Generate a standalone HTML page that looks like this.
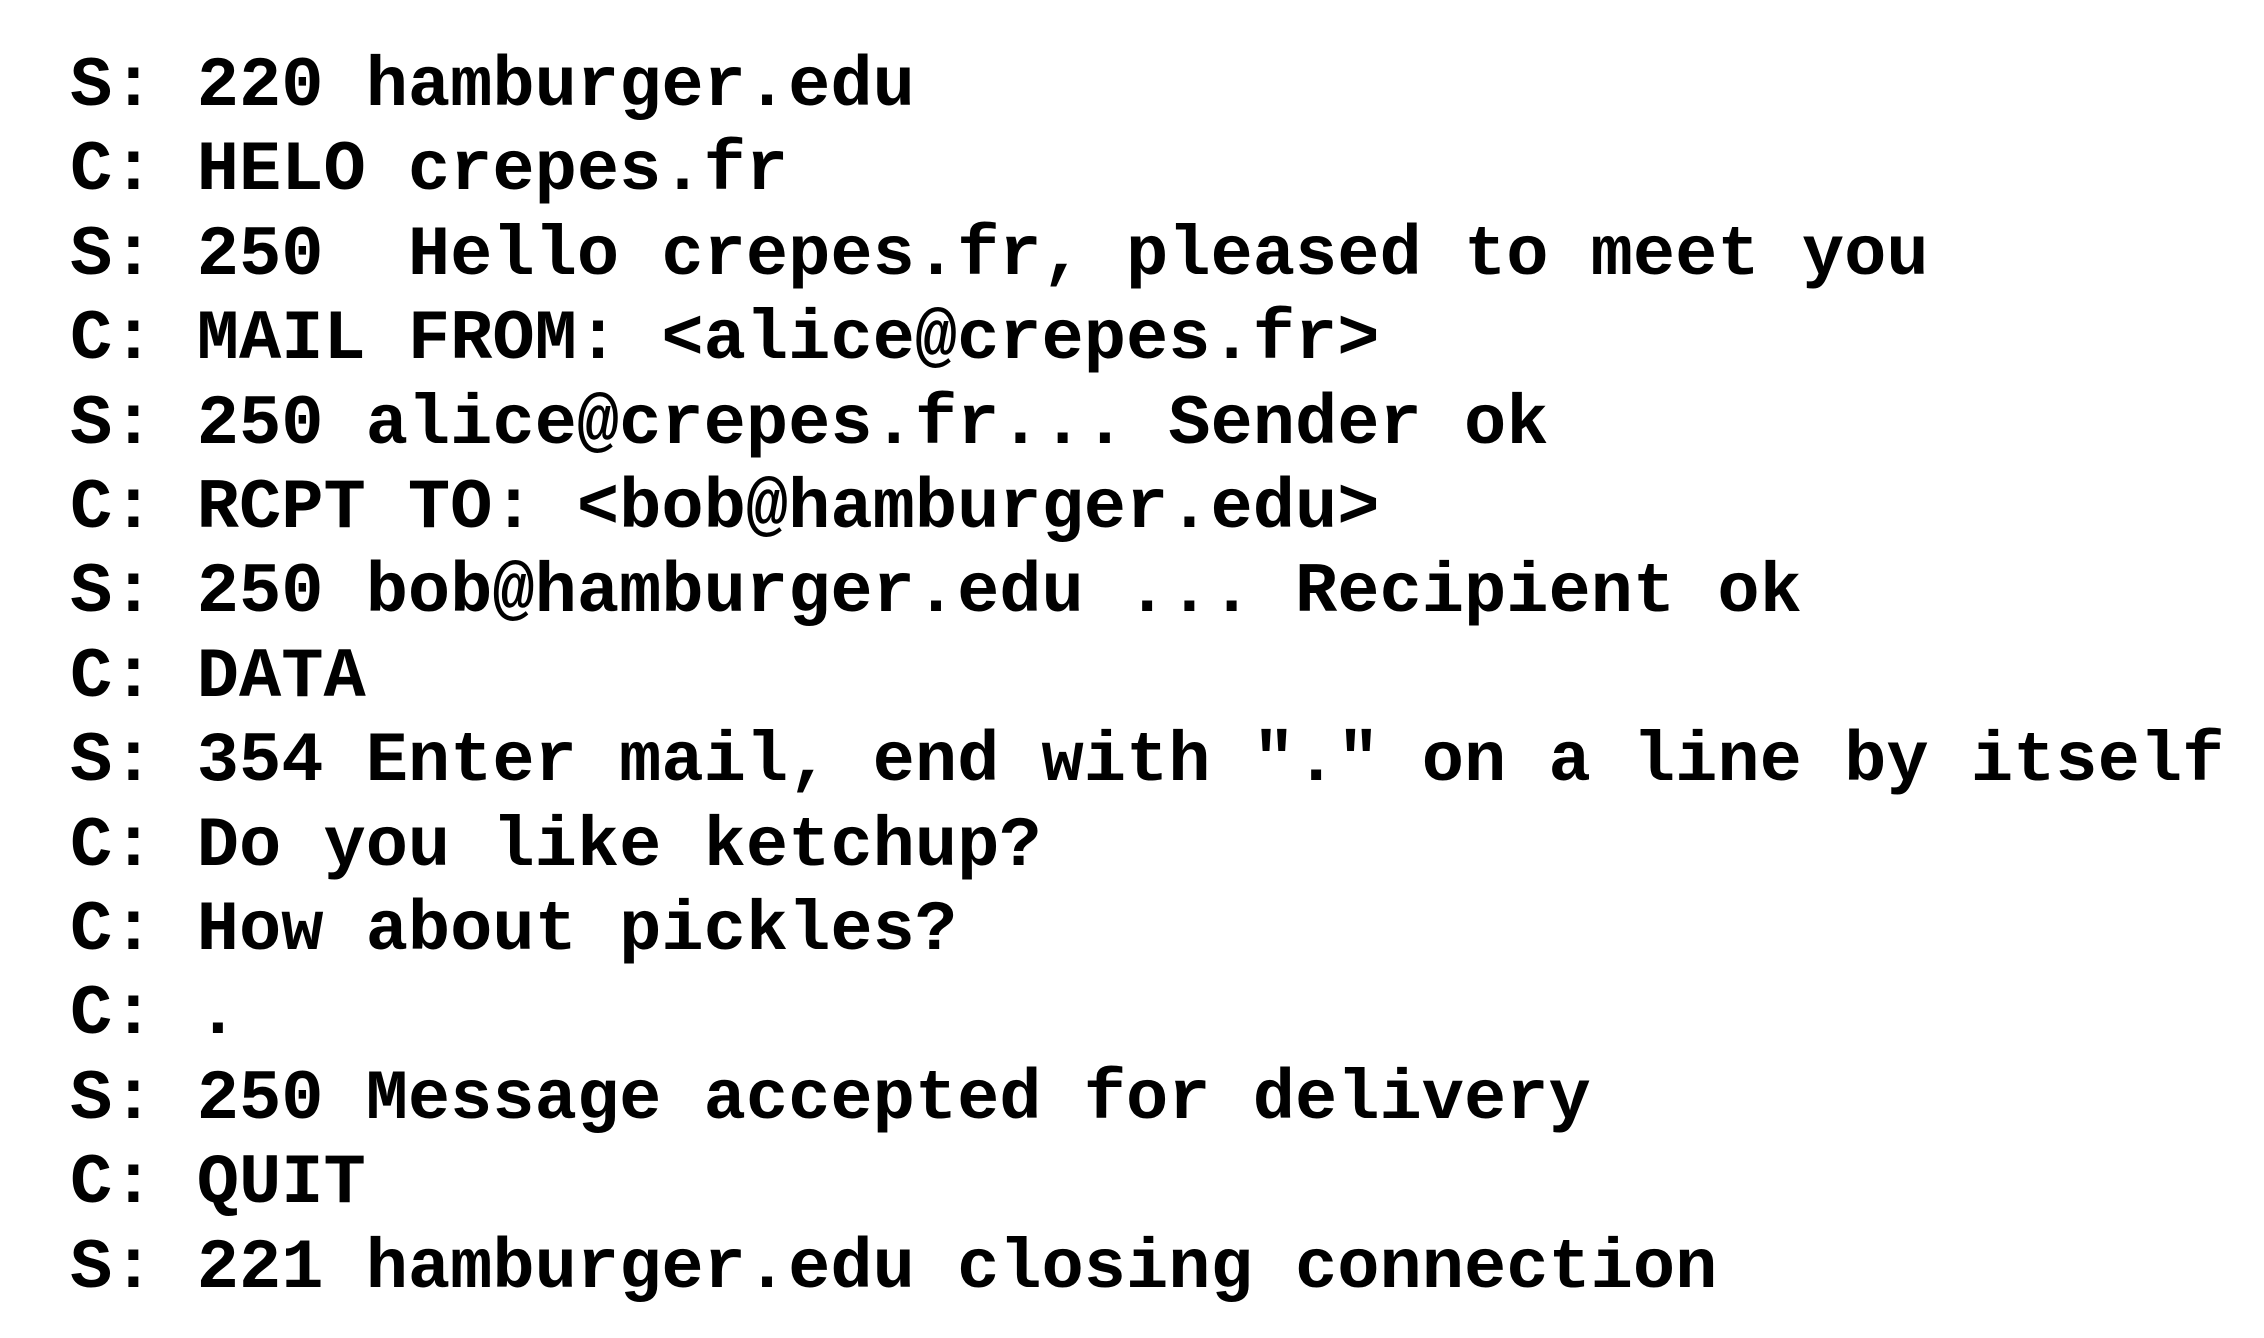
<!DOCTYPE html>
<html><head><meta charset="utf-8"><style>
html,body{margin:0;padding:0;background:#fff;width:2264px;height:1338px;overflow:hidden}
pre{position:absolute;left:70px;top:45px;margin:0;font-family:"Liberation Mono","Courier New",monospace;font-weight:bold;font-size:70.4px;line-height:84.4px;color:#000}
</style></head><body>
<pre>S: 220 hamburger.edu
C: HELO crepes.fr
S: 250  Hello crepes.fr, pleased to meet you
C: MAIL FROM: &lt;alice@crepes.fr&gt;
S: 250 alice@crepes.fr... Sender ok
C: RCPT TO: &lt;bob@hamburger.edu&gt;
S: 250 bob@hamburger.edu ... Recipient ok
C: DATA
S: 354 Enter mail, end with "." on a line by itself
C: Do you like ketchup?
C: How about pickles?
C: .
S: 250 Message accepted for delivery
C: QUIT
S: 221 hamburger.edu closing connection</pre>
</body></html>
